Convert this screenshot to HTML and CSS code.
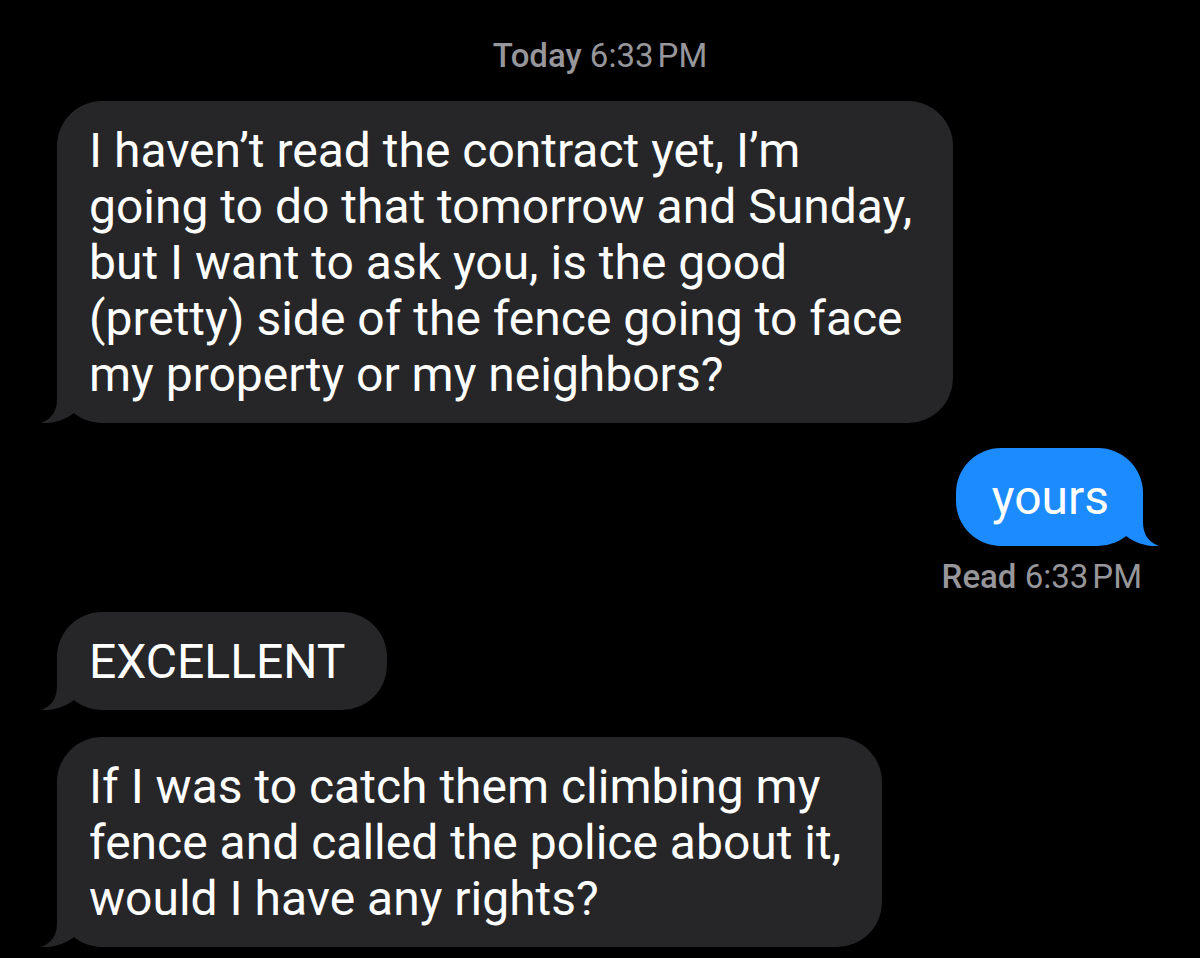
FILE: index.html
```html
<!DOCTYPE html>
<html lang="en">
<head>
<meta charset="utf-8">
<title>Messages</title>
<link rel="stylesheet" href="styles.css">
</head>
<body>
<main class="thread">
  <div class="stamp"><b>Today</b> 6:33&#8239;PM</div>

  <div class="bubble in b1">I haven’t read the contract yet, I’m<br>going to do that tomorrow and Sunday,<br>but I want to ask you, is the good<br>(pretty) side of the fence going to face<br>my property or my neighbors?</div>

  <div class="bubble out b2">yours</div>
  <div class="receipt"><b>Read</b> 6:33&#8239;PM</div>

  <div class="bubble in b3">EXCELLENT</div>

  <div class="bubble in b4">If I was to catch them climbing my<br>fence and called the police about it,<br>would I have any rights?</div>
</main>
</body>
</html>
```

FILE: styles.css
```css
html, body {
  margin: 0;
  padding: 0;
  background: #000;
}

body {
  font-family: Roboto, "Liberation Sans", Arial, sans-serif;
  color: #fff;
  width: 1200px;
  height: 958px;
  overflow: hidden;
}

.thread {
  display: flex;
  flex-direction: column;
  padding: 37px 57px 0 57px;
}

.stamp,
.receipt {
  font-size: 33px;
  line-height: 38px;
  color: #96969b;
  white-space: nowrap;
}

.stamp b,
.receipt b {
  font-weight: 500;
}

.stamp {
  align-self: center;
  margin-bottom: 26px;
}

.receipt {
  align-self: flex-end;
  margin-top: 12px;
  margin-bottom: 16px;
  margin-right: 1px;
}

.bubble {
  position: relative;
  width: fit-content;
  font-size: 48px;
  line-height: 56px;
  border-radius: 45px;
  white-space: nowrap;
}

.bubble.in {
  align-self: flex-start;
  background: #262629;
  padding: 22px 41px 20px 32px;
}

.bubble.out {
  align-self: flex-end;
  background: #1c8bfe;
  padding: 22px 34px 20px 36px;
}

.bubble.in::before {
  content: "";
  position: absolute;
  left: -17px;
  bottom: 0;
  width: 40px;
  height: 50px;
  background: inherit;
  clip-path: path("M17 0 L17 26 C17 38 12 46 1 50 C12 51 25 47 34 40 L34 0 Z");
}

.bubble.out::after {
  content: "";
  position: absolute;
  right: -17px;
  bottom: 0;
  width: 40px;
  height: 50px;
  background: inherit;
  clip-path: path("M23 0 L23 26 C23 38 28 46 39 50 C28 51 15 47 6 40 L6 0 Z");
}

.b1 { margin-bottom: 25px; }
.b4 { margin-top: 27px; }
```
